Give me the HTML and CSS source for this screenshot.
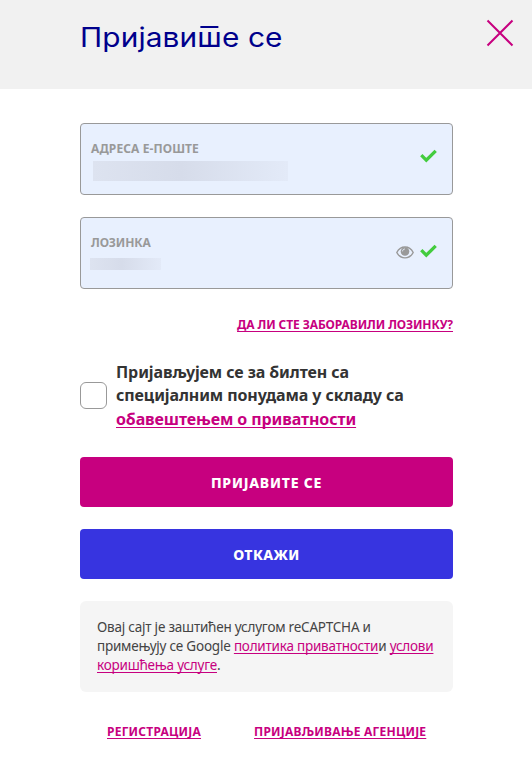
FILE: index.html
```html
<!DOCTYPE html>
<html lang="sr">
<head>
  <meta charset="UTF-8">
  <meta name="viewport" content="width=device-width, initial-scale=1.0">
  <title>Пријавите се</title>
  <link rel="stylesheet" href="styles.css">
</head>
<body>
  <header class="modal-header">
    <h1>Пријави<span class="te">ш</span>е се</h1>
    <button class="close" type="button" aria-label="Затвори">
      <svg width="28" height="28" viewBox="0 0 28 28"><path d="M1.5 1.5l25 25M26.5 1.5l-25 25" stroke="#c7007f" stroke-width="2" fill="none"/></svg>
    </button>
  </header>
  <main>
    <div class="field">
      <div class="field-text">
        <span class="label label-email">АДРЕСА Е-ПОШТЕ</span>
        <span class="value value-email"></span>
      </div>
      <svg class="check" width="17" height="14" viewBox="0 0 17 14"><path d="M1.3 6.2l5 5L15.7 1.8" stroke="#43cc3e" stroke-width="3.3" fill="none"/></svg>
    </div>
    <div class="field field-password">
      <div class="field-text">
        <span class="label label-password">ЛОЗИНКА</span>
        <span class="value value-password"></span>
      </div>
      <svg class="eye" width="18" height="13" viewBox="0 0 18 13"><path d="M.8 6.5C4.6-.8 13.4-.8 17.2 6.5 13.4 13.6 4.6 13.6.8 6.5z" stroke="#999" stroke-width="1.4" fill="none"/><circle cx="9" cy="5.5" r="4.3" fill="#999"/><path d="M6.6 5.3c0-1.4.9-2.3 2.2-2.3" stroke="#e8f0fe" stroke-width="1" fill="none"/></svg>
      <svg class="check" width="17" height="14" viewBox="0 0 17 14"><path d="M1.3 6.2l5 5L15.7 1.8" stroke="#43cc3e" stroke-width="3.3" fill="none"/></svg>
    </div>
    <a class="forgot" href="#">ДА ЛИ СТЕ ЗАБОРАВИЛИ ЛОЗИНКУ?</a>
    <div class="newsletter">
      <span class="checkbox" role="checkbox" aria-checked="false"></span>
      <p>Пријављујем се за билтен са<br>специјалним понудама у складу са<br><a href="#">обавештењем о приватности</a></p>
    </div>
    <button class="btn btn-login" type="button">ПРИЈАВИТЕ СЕ</button>
    <button class="btn btn-cancel" type="button">ОТКАЖИ</button>
    <p class="captcha">Овај сајт је заштићен услугом reCAPTCHA и<br>примењују се Google <a href="#">политика приватности</a>и <a href="#">услови<br>коришћења услуге</a>.</p>
    <nav class="links">
      <a class="register" href="#">РЕГИСТРАЦИЈА</a>
      <a class="agency" href="#">ПРИЈАВЉИВАЊЕ АГЕНЦИЈЕ</a>
    </nav>
  </main>
</body>
</html>
```
FILE: styles.css
```css
* {
  box-sizing: border-box;
}
body {
  margin: 0;
  background-color: #fff;
  color: #333;
  font-family: "Noto Sans", "Open Sans", sans-serif;
}
p {
  margin: 0;
}
a {
  color: #c7007f;
  text-decoration: underline;
  text-decoration-thickness: 1px;
  text-underline-offset: 2px;
  text-decoration-skip-ink: none;
}
button {
  border: none;
  padding: 0;
  cursor: pointer;
}
.modal-header {
  display: flex;
  justify-content: space-between;
  height: 89px;
  padding: 19px 18px 0 80px;
  background-color: #f1f1f1;
}
.modal-header h1 {
  margin: 0;
  font-family: Inter, sans-serif;
  font-size: 26.5px;
  line-height: 36px;
  font-weight: 400;
  letter-spacing: 0.1px;
  color: #00008c;
  white-space: nowrap;
  transform: scaleX(1.125);
  transform-origin: left center;
}
.te {
  position: relative;
}
.te::after {
  content: "";
  position: absolute;
  left: 3px;
  right: 3px;
  top: 5px;
  height: 2px;
  background-color: #00008c;
}
.close {
  width: 28px;
  height: 28px;
  background: none;
}
.close svg {
  display: block;
}
main {
  display: flex;
  flex-direction: column;
  width: 373px;
  margin: 34px 0 0 80px;
}
.field {
  display: flex;
  align-items: center;
  height: 72px;
  padding: 0 15px 0 10px;
  border: 1px solid #999;
  border-radius: 4px;
  background-color: #e8f0fe;
}
.field-password {
  margin-top: 22px;
}
.field-text {
  flex: 1;
  align-self: stretch;
  display: flex;
  flex-direction: column;
  padding-top: 16px;
}
.label {
  font-size: 12px;
  line-height: 18px;
  font-weight: 700;
  color: #999;
}
.label-email {
  letter-spacing: 0.1px;
}
.label-password {
  letter-spacing: -0.1px;
}
/* hidden input text */
.value {
  display: block;
  background: linear-gradient(90deg, #dde3f0, #d6dcea 45%, #e3eaf8);
}
.value-email {
  width: 195px;
  height: 20px;
  margin: 3px 0 0 2px;
}
.value-password {
  width: 71px;
  height: 12px;
  margin: 6px 0 0 -1px;
}
.check {
  margin-top: -6px;
}
.field-password .check {
  margin: -4px 0 0 6px;
}
.eye {
  margin-top: -2px;
}
.forgot {
  align-self: flex-end;
  margin-top: 26px;
  font-size: 12px;
  line-height: 20px;
  font-weight: 700;
  letter-spacing: -0.1px;
  white-space: nowrap;
}
.newsletter {
  display: flex;
  align-items: center;
  gap: 9px;
  height: 71px;
  margin-top: 25px;
  font-size: 16px;
  line-height: 23.6px;
  font-weight: 700;
  letter-spacing: -0.1px;
  white-space: nowrap;
}
.newsletter p {
  padding-top: 1px;
}
.checkbox {
  flex: none;
  width: 27px;
  height: 27px;
  border: 1px solid #999;
  border-radius: 6px;
}
.btn {
  height: 50px;
  margin-top: 26px;
  border-radius: 4px;
  font-family: "Noto Sans", sans-serif;
  font-size: 14px;
  font-weight: 800;
  color: #fff;
}
.btn-login {
  background-color: #c7007f;
  letter-spacing: 0.75px;
}
.btn-cancel {
  margin-top: 22px;
  background-color: #3734e0;
  letter-spacing: 0.4px;
}
.captcha {
  height: 91px;
  margin-top: 22px;
  padding: 17px 17px 0;
  border-radius: 6px;
  background-color: #f5f5f5;
  color: #444;
  font-size: 13.5px;
  line-height: 19px;
  letter-spacing: -0.22px;
  white-space: nowrap;
}
.links {
  display: flex;
  gap: 53px;
  margin-top: 30px;
  padding-left: 27px;
  font-size: 12px;
  line-height: 20px;
  font-weight: 700;
  letter-spacing: 0.22px;
  white-space: nowrap;
}
```
